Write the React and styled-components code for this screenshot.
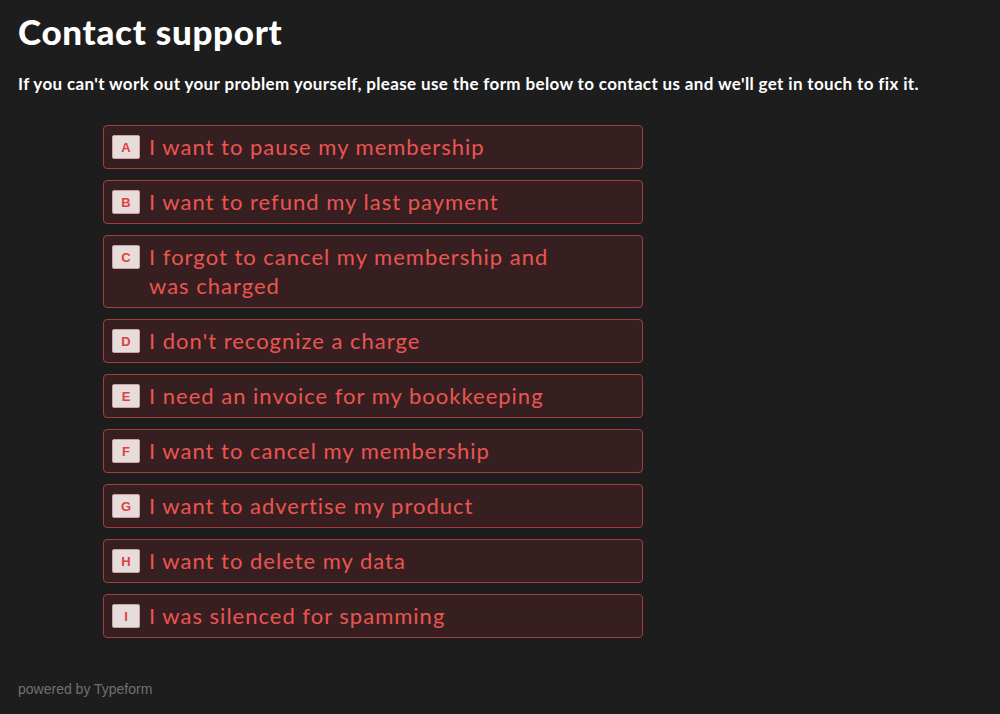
import styled, { createGlobalStyle } from "styled-components";

const GlobalStyle = createGlobalStyle`
	html, body {
		margin: 0;
		padding: 0;
		background: #1d1d1d;
	}
	* {
		box-sizing: border-box;
	}
`;

const choices = [
	{ key: "A", label: "I want to pause my membership" },
	{ key: "B", label: "I want to refund my last payment" },
	{ key: "C", label: "I forgot to cancel my membership and was charged" },
	{ key: "D", label: "I don't recognize a charge" },
	{ key: "E", label: "I need an invoice for my bookkeeping" },
	{ key: "F", label: "I want to cancel my membership" },
	{ key: "G", label: "I want to advertise my product" },
	{ key: "H", label: "I want to delete my data" },
	{ key: "I", label: "I was silenced for spamming" },
];

const App = () => {
	return (
		<Page>
			<GlobalStyle />
			<Title>Contact support</Title>
			<Intro>
				If you can't work out your problem yourself, please use the form below
				to contact us and we'll get in touch to fix it.
			</Intro>

			{/* multiple choice list */}
			<ChoiceList>
				{choices.map((c) => (
					<Choice key={c.key}>
						<KeyHint>{c.key}</KeyHint>
						<ChoiceLabel>{c.label}</ChoiceLabel>
					</Choice>
				))}
			</ChoiceList>

			<Footer>powered by Typeform</Footer>
		</Page>
	);
};

const Page = styled.div`
	width: 1000px;
	height: 714px;
	background: #1d1d1d;
	padding: 10px 18px 0;
	display: flex;
	flex-direction: column;
`;

const Title = styled.h1`
	margin: 0;
	font-family: "Lato", "Noto Sans", sans-serif;
	font-weight: 900;
	font-size: 35px;
	line-height: 42px;
	color: #ffffff;
	letter-spacing: 0.7px;
`;

const Intro = styled.p`
	margin: 20px 0 0;
	font-family: "Lato", "Noto Sans", sans-serif;
	font-weight: 700;
	font-size: 17px;
	line-height: 24px;
	letter-spacing: 0.36px;
	color: #ffffff;
`;

const ChoiceList = styled.div`
	margin: 29px 0 0 85px;
	width: 540px;
	display: flex;
	flex-direction: column;
	gap: 11px;
`;

const Choice = styled.div`
	display: flex;
	align-items: flex-start;
	gap: 9px;
	padding: 6px 8px 7px;
	background: #371f21;
	border: 1px solid #9e413d;
	border-radius: 4px;
	cursor: pointer;
`;

const KeyHint = styled.span`
	flex: none;
	width: 28px;
	height: 24px;
	margin-top: 3px;
	display: flex;
	align-items: center;
	justify-content: center;
	background: #e6dcdc;
	border: 1px solid #c9a3a2;
	border-radius: 2px;
	font-family: "Liberation Sans", Arial, sans-serif;
	font-weight: 700;
	font-size: 13px;
	color: #e0413c;
`;

const ChoiceLabel = styled.span`
	max-width: 410px;
	font-family: "Lato", "Noto Sans", sans-serif;
	font-size: 22px;
	line-height: 29px;
	letter-spacing: 1px;
	color: #ea5550;
`;

const Footer = styled.div`
	margin-top: auto;
	margin-bottom: 17px;
	font-family: "Liberation Sans", Arial, sans-serif;
	font-size: 14px;
	color: #707070;
`;

export default App;
